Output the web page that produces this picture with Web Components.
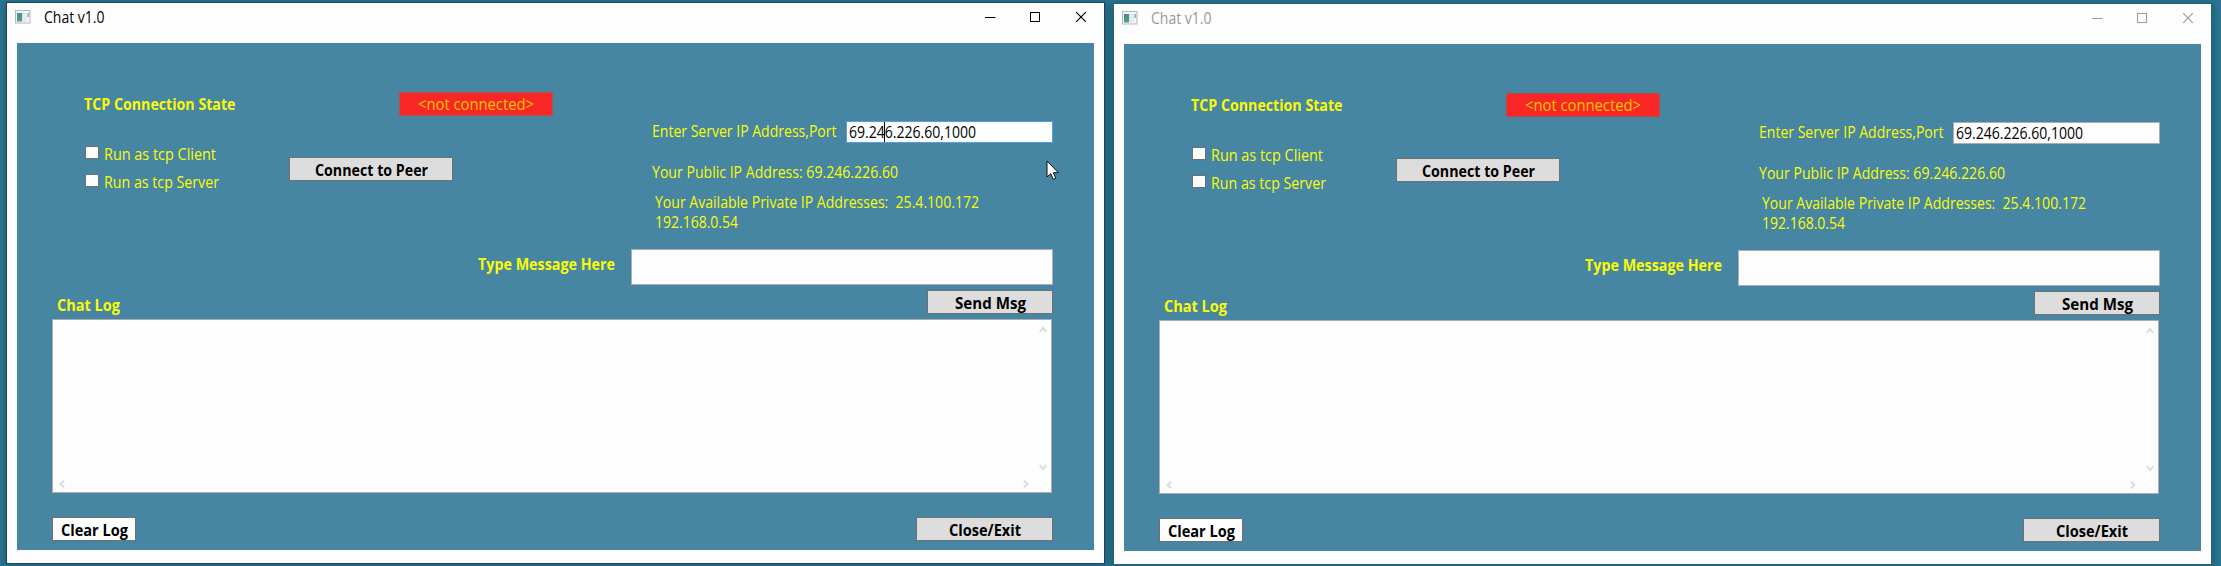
<!DOCTYPE html>
<html lang="en">
<head>
<meta charset="utf-8">
<title>Chat v1.0</title>
<style>
html, body { margin: 0; height: 100%; }
body { overflow: hidden; background: #2a7894; font-family: "Open Sans", "Noto Sans", sans-serif; }
</style>
</head>
<body>
<chat-desktop>
  <chat-window active></chat-window>
  <chat-window></chat-window>
</chat-desktop>
<script>
function shadow(el, html) {
  const root = el.attachShadow({ mode: 'open' });
  root.innerHTML = html;
  return root;
}

/* One line of text, condensed or widened to a given width. */
customElements.define('fit-text', class extends HTMLElement {
  connectedCallback() {
    if (this.shadowRoot) return;
    const w = +this.getAttribute('w');
    const root = shadow(this, `<style>
      :host { display: block; flex: none; width: ${w}px; height: 20px; font-size: 16px; line-height: 20px; white-space: pre; color: #fbfb08; }
      :host([bold]) { font-weight: 700; font-size: 15.5px; line-height: 22px; }
      :host([dark]) { color: #000; }
      span { display: inline-block; transform-origin: 0 50%; }
    </style><span></span>`);
    const span = root.querySelector('span');
    span.textContent = this.getAttribute('text');
    span.style.transform = `scaleX(${w / span.getBoundingClientRect().width})`;
  }
});

customElements.define('chat-button', class extends HTMLElement {
  connectedCallback() {
    if (this.shadowRoot) return;
    shadow(this, `<style>
      :host { display: flex; flex: none; box-sizing: border-box; height: 24px; border: 1px solid #707070; background: #dddddd; justify-content: center; padding-top: 1px; }
      :host([plain]) { background: #fdfdfd; }
      :host([alert]) { background: #f82624; border-color: #a8534e; }
      :host([alert]) fit-text { color: #ffc800; }
    </style><fit-text text="${this.getAttribute('label').replace('<', '&lt;')}" w="${this.getAttribute('tw')}" ${this.hasAttribute('alert') ? '' : 'bold dark'}></fit-text>`);
  }
});

customElements.define('chat-check', class extends HTMLElement {
  connectedCallback() {
    if (this.shadowRoot) return;
    shadow(this, `<style>
      :host { display: flex; height: 20px; }
      i { flex: none; box-sizing: border-box; width: 14px; height: 13px; margin: 2px 4.5px 0 0; border: 1px solid #707070; background: #fdfdfd; }
    </style><i></i><fit-text text="${this.getAttribute('label')}" w="${this.getAttribute('tw')}"></fit-text>`);
  }
});

customElements.define('chat-field', class extends HTMLElement {
  connectedCallback() {
    if (this.shadowRoot) return;
    shadow(this, `<style>
      :host { display: block; flex: none; position: relative; box-sizing: border-box; border: 1px solid #abadb3; background: #fdfdfd; }
      :host([focused]) { border-color: #569de5; }
      ::slotted(fit-text) { margin-left: 2px; }
      b { display: none; position: absolute; left: 37px; top: 0; width: 1px; height: 20px; background: #000; }
      :host([focused]) b { display: block; }
    </style><slot></slot><b></b>`);
  }
});

customElements.define('chat-log', class extends HTMLElement {
  connectedCallback() {
    if (this.shadowRoot) return;
    shadow(this, `<style>
      :host { display: grid; box-sizing: border-box; width: 1000px; height: 174px; border: 1px solid #abadb3; background: #fdfdfd; grid-template: 1fr 17px / 1fr 17px; }
      .v { display: flex; flex-direction: column; justify-content: space-between; align-items: center; grid-area: 1 / 2; padding: 6px 0 4px; }
      .h { display: flex; justify-content: space-between; align-items: center; grid-area: 2 / 1; padding: 0 5px 0 6px; }
      svg { display: block; fill: none; stroke: #dcdcdc; stroke-width: 2; }
    </style>
    <div class="v">
      <svg width="8" height="7"><path d="M.8 5.8 4 1.8 7.2 5.8"/></svg>
      <svg width="8" height="7"><path d="M.8 1.2 4 5.2 7.2 1.2"/></svg>
    </div>
    <div class="h">
      <svg width="6" height="8"><path d="M5 .8 1.6 4 5 7.2"/></svg>
      <svg width="6" height="8"><path d="M1 .8 4.4 4 1 7.2"/></svg>
    </div>`);
  }
});

customElements.define('title-bar', class extends HTMLElement {
  connectedCallback() {
    if (this.shadowRoot) return;
    const on = this.hasAttribute('active');
    shadow(this, `<style>
      :host { display: flex; height: 40px; padding: 0 17px 0 8px; color: ${on ? '#000' : '#999'}; }
      .app { flex: none; margin-top: 7px; }
      fit-text { margin: 4px auto 0 12.5px; color: inherit; }
      .ctl { display: flex; gap: 34px; margin-top: 8px; }
      .ctl svg { fill: none; stroke: currentColor; overflow: visible; }
      .ctl svg:last-child { margin-left: 1px; }
    </style>
    <svg class="app" width="16" height="14">
      <defs><linearGradient id="g" x1="0" y1="0" x2=".4" y2="1"><stop offset="0" stop-color="#4d7fa8"/><stop offset="1" stop-color="#55a080"/></linearGradient></defs>
      <rect x=".5" y=".5" width="14.5" height="12.5" fill="#f6f7f8" stroke="#b3b8bb"/>
      <rect x="2" y="3" width="5.2" height="8.5" fill="url(#g)"/>
      <rect x="8" y="3" width="3.8" height="8.5" fill="#e6e8e9"/>
      <rect x="12.3" y="3" width="1.8" height="4" fill="#8fb8bd"/>
    </svg>
    <fit-text text="Chat v1.0" w="60.5"></fit-text>
    <div class="ctl">
      <svg width="11" height="12"><path d="M0 6.5H10.5"/></svg>
      <svg width="11" height="12"><rect x=".5" y="1.5" width="9" height="9"/></svg>
      <svg width="11" height="12"><path d="M.2 1.2 9.8 10.8M9.8 1.2.2 10.8" stroke-width="1.15"/></svg>
    </div>`);
  }
});

customElements.define('chat-window', class extends HTMLElement {
  connectedCallback() {
    if (this.shadowRoot) return;
    const on = this.hasAttribute('active');
    shadow(this, `<style>
      :host { display: block; flex: none; position: relative; box-sizing: border-box; width: 1097px; height: 560px; background: #fdfdfd;
        box-shadow: 0 0 0 1px ${on ? '#1d4454' : '#2c6074'}, 0 1px 9px 2px rgba(10,40,55,.4); }
      .panel { box-sizing: border-box; width: 1077px; height: 507px; margin-left: 10px; padding: 49px 0 0 35px; background: #4686a2; }
      .top { display: flex; height: 157px; }
      .left { width: 600px; padding-left: 31px; box-sizing: border-box; }
      .row { display: flex; }
      .state { justify-content: space-between; padding: 0 99px 0 0; height: 52px; }
      .state fit-text { margin: 1px 0 0 1px; }
      .checks { display: grid; row-gap: 8px; width: 206px; align-content: start; padding-left: 2px; box-sizing: border-box; }
      .right { padding-top: 29px; }
      .msg { width: 1001px; justify-content: flex-end; }
      .log-head { width: 1001px; justify-content: space-between; margin: 5px 0; height: 24px; }
      .foot { width: 1001px; justify-content: space-between; margin-top: 24px; }
      .cursor { position: absolute; left: 1038.5px; top: 157px; }
    </style>
    <title-bar ${on ? 'active' : ''}></title-bar>
    <div class="panel">
      <div class="top">
        <div class="left">
          <div class="row state">
            <fit-text text="TCP Connection State" w="151.5" bold></fit-text>
            <chat-button style="width:154px" label="<not connected>" tw="116" alert></chat-button>
          </div>
          <div class="row">
            <div class="checks">
              <chat-check label="Run as tcp Client" tw="112"></chat-check>
              <chat-check label="Run as tcp Server" tw="115"></chat-check>
            </div>
            <chat-button style="width:164px;margin-top:13px" label="Connect to Peer" tw="113"></chat-button>
          </div>
        </div>
        <div class="right">
          <div class="row">
            <fit-text text="Enter Server IP Address,Port" w="184.5" style="margin-right:9.5px"></fit-text>
            <chat-field style="width:207px;height:22px" ${on ? 'focused' : ''}><fit-text text="69.246.226.60,1000" w="127" dark></fit-text></chat-field>
          </div>
          <fit-text text="Your Public IP Address: 69.246.226.60" w="246" style="margin-top:19px"></fit-text>
          <fit-text text="Your Available Private IP Addresses:  25.4.100.172" w="324" style="margin:10px 0 0 3px"></fit-text>
          <fit-text text="192.168.0.54" w="83" style="margin-left:3px"></fit-text>
        </div>
      </div>
      <div class="row msg">
        <fit-text text="Type Message Here" w="137" bold style="margin:4px 16px 0 0"></fit-text>
        <chat-field style="width:422px;height:36px"></chat-field>
      </div>
      <div class="row log-head">
        <fit-text text="Chat Log" w="63" bold style="margin:4px 0 0 5px"></fit-text>
        <chat-button style="width:126px" label="Send Msg" tw="71"></chat-button>
      </div>
      <chat-log></chat-log>
      <div class="row foot">
        <chat-button style="width:84px" label="Clear Log" tw="67" plain></chat-button>
        <chat-button style="width:137px" label="Close/Exit" tw="72"></chat-button>
      </div>
    </div>
    ${on ? '<svg class="cursor" width="14" height="21"><path d="M1 1V17L4.7 13.6 7.3 19.3 9.8 18.2 7.3 12.7H12.4Z" fill="#fdfdfd" stroke="#111"/></svg>' : ''}`);
  }
});

customElements.define('chat-desktop', class extends HTMLElement {
  connectedCallback() {
    if (this.shadowRoot) return;
    shadow(this, `<style>
      :host { display: flex; gap: 10px; box-sizing: border-box; width: 2221px; height: 566px; padding: 3px 0 0 7px; overflow: hidden; }
      ::slotted(chat-window:last-child) { margin-top: 1px; }
    </style><slot></slot>`);
  }
});
</script>
</body>
</html>
